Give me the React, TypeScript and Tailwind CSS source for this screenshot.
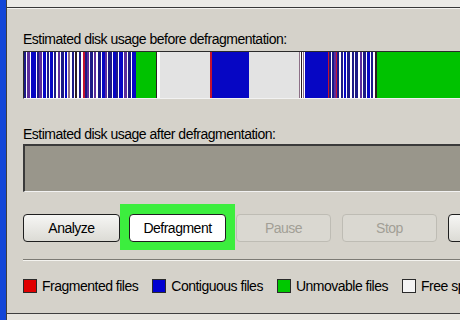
import React from 'react';

const N = '#1c1a86';
const B = '#0606c4';
const P = '#5b2d9c';
const W = '#ffffff';
const R = '#c41230';
const M = '#8c6f86';
const K = '#2c1c24';
const G = '#00c200';
const L = '#e3e3e3';

// [colour, width in px] of each run in the "before" map
const beforeMap: [string, number][] = [
  [N, 2], [W, 1], [P, 3], [W, 1], [B, 5], [W, 1], [N, 2], [P, 3], [W, 1], [B, 3], [W, 1], [N, 2],
  [W, 1], [B, 3], [W, 1], [N, 2], [W, 2], [P, 2], [W, 1], [N, 3], [W, 1], [B, 2], [W, 1], [M, 2],
  [W, 2], [N, 2], [W, 1], [K, 2], [W, 2], [N, 2], [W, 2], [R, 2], [N, 2], [P, 2], [W, 1], [N, 3],
  [W, 1], [P, 2], [W, 2], [N, 3], [W, 1], [B, 3], [P, 2], [W, 1], [N, 4], [W, 1], [B, 3], [N, 2],
  [W, 1], [B, 4], [W, 1], [P, 3], [W, 1], [N, 3], [W, 1], [B, 4],
  [G, 20], [K, 1], [W, 3], [L, 50], [R, 2], [B, 37], [L, 50],
  [M, 1], [W, 1], [K, 1], [W, 1], [M, 1], [W, 1], [B, 23],
  [R, 1], [N, 2], [W, 1], [N, 2], [P, 2], [R, 1], [N, 2], [W, 2], [N, 2], [W, 1], [B, 2], [W, 1],
  [N, 3], [W, 2], [N, 2], [W, 1], [N, 3], [W, 2], [P, 2], [W, 1], [N, 3], [W, 1], [B, 3], [W, 1],
  [N, 2], [W, 2], [K, 2],
];

const legend = [
  { label: 'Fragmented files', color: 'bg-[#e00000]' },
  { label: 'Contiguous files', color: 'bg-[#0000d0]' },
  { label: 'Unmovable files', color: 'bg-[#00c800]' },
  { label: 'Free space', color: 'bg-[#f4f4f4]' },
];

const App = () => {
  return (
    <div className="w-[460px] h-[320px] flex overflow-hidden bg-[#d5d2ca] font-['Liberation_Sans',Arial,sans-serif] text-[14px] tracking-[-0.5px] text-black">
      <div className="w-[6px] shrink-0 bg-[#1246d8]" />
      <div className="flex-1 flex flex-col border-l border-[#3e3e3e] overflow-hidden">
        <div className="h-[8px] shrink-0 bg-[#ebeae6] border-b border-[#383838]" />
        <div className="flex-1 flex flex-col border-t border-[#f4f3ef] pl-[16px] overflow-hidden">
          <p className="mt-[22px] leading-[16px] whitespace-nowrap">Estimated disk usage before defragmentation:</p>
          <div className="mt-[4px] w-[480px] h-[48px] shrink-0 flex border-t border-l border-[#2a2a2a] border-b border-b-[#f2f2f2]">
            {beforeMap.map(([c, w], i) => (
              <div key={i} className="h-full shrink-0" style={{ width: w, background: c }} />
            ))}
            <div className="h-full flex-1 bg-[#00c200]" />
          </div>

          <p className="mt-[27px] leading-[16px] whitespace-nowrap">Estimated disk usage after defragmentation:</p>
          <div className="mt-[2px] w-[480px] h-[48px] shrink-0 bg-[#99968b] border-t-2 border-l-2 border-[#3a3a3a] border-b border-b-[#f2f2f2]" />

          <div className="mt-[22px] flex items-center gap-[10px]">
            <button className="w-[97px] h-[28px] shrink-0 rounded-[4px] border border-[#1e1e1e] bg-gradient-to-b from-[#f6f6f4] to-[#dcdbd5] text-black">
              Analyze
            </button>
            <div className="relative shrink-0 -ml-px">
              <div className="absolute left-[-9px] right-[-9px] top-[-10px] bottom-[-8px] bg-[#3cee3e]" />
              <button className="relative w-[97px] h-[28px] rounded-[4px] border border-[#1e1e1e] bg-white text-black">
                Defragment
              </button>
            </div>
            <button className="w-[95px] h-[28px] shrink-0 rounded-[4px] border border-[#bebcb4] bg-[#dad8d1] text-[#a29f96]">
              Pause
            </button>
            <button className="ml-px w-[95px] h-[28px] shrink-0 rounded-[4px] border border-[#bebcb4] bg-[#dad8d1] text-[#a29f96]">
              Stop
            </button>
            <button className="ml-px w-[95px] h-[28px] shrink-0 rounded-[4px] border border-[#1e1e1e] bg-gradient-to-b from-[#f6f6f4] to-[#dcdbd5]" />
          </div>

          <div className="mt-[17px] h-[2px] w-[480px] shrink-0 border-t border-[#7c7a74] border-b border-b-[#f4f3ef]" />

          <div className="mt-[17px] flex items-center gap-[14px] whitespace-nowrap">
            {legend.map(item => (
              <div key={item.label} className="flex items-center gap-[5px] shrink-0">
                <span className={`w-[14px] h-[14px] border border-[#2a2a2a] ${item.color}`} />
                <span className="leading-[16px]">{item.label}</span>
              </div>
            ))}
          </div>
        </div>
        <div className="h-[7px] shrink-0 bg-[#e6e4de] border-t border-[#3e3e3e]" />
      </div>
    </div>
  );
};

export default App;
